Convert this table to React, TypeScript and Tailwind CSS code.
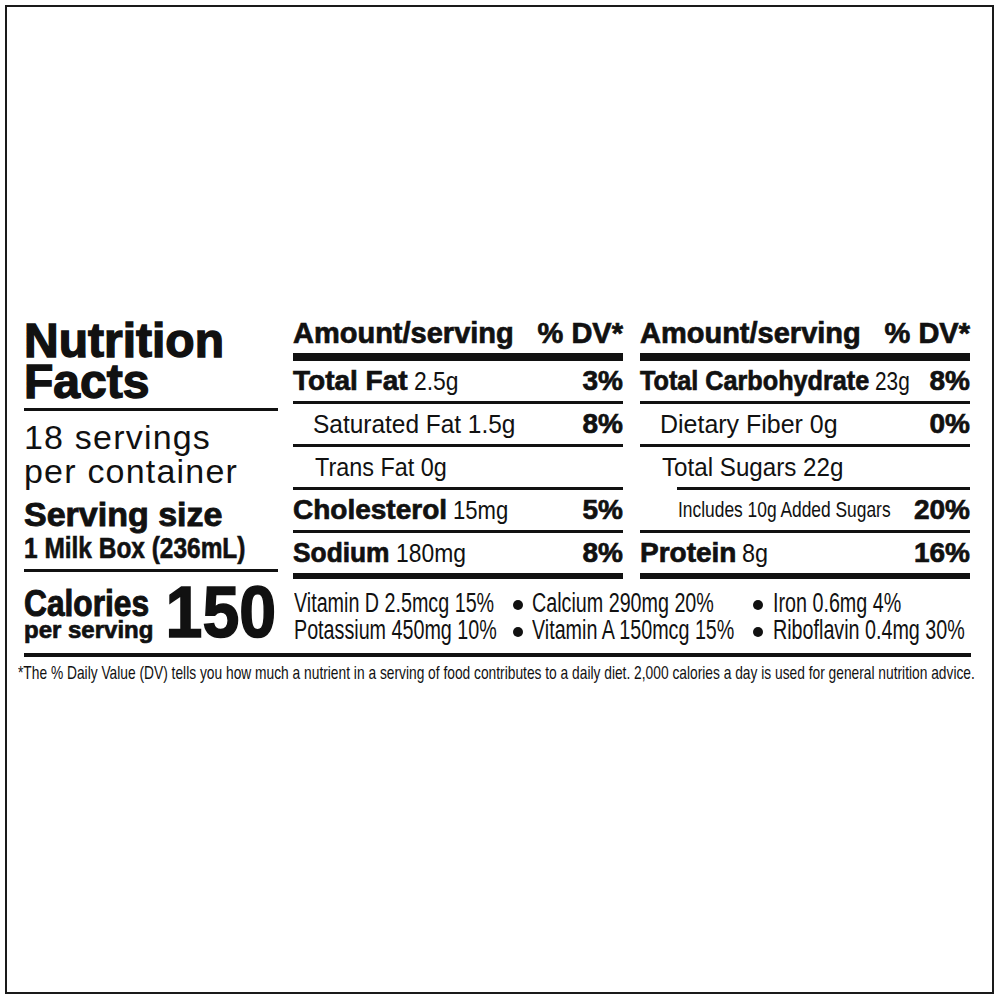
import React from "react";

function Cond({ children, cls }: { children: React.ReactNode; cls: string }) {
  return <span className={`inline-block whitespace-nowrap ${cls}`}>{children}</span>;
}

function Row({
  children,
  pct,
  cls = "",
}: {
  children: React.ReactNode;
  pct?: string;
  cls?: string;
}) {
  return (
    <div className={`h-[40px] flex items-center justify-between ${cls}`}>
      <div className="flex-1 min-w-0 flex items-baseline gap-[6px] whitespace-nowrap">{children}</div>
      {pct ? (
        <span className="shrink-0 text-[28px] font-bold leading-none [-webkit-text-stroke:0.7px_#111]">{pct}</span>
      ) : null}
    </div>
  );
}

function Header() {
  return (
    <>
      <div className="h-[30px] flex items-center justify-between text-[29px] font-bold leading-[30px] [-webkit-text-stroke:0.7px_#111]">
        <span>Amount/serving</span>
        <span>% DV*</span>
      </div>
      <div className="mt-[5px] h-[8px] bg-[#111]" />
    </>
  );
}

function B({ children }: { children: React.ReactNode }) {
  return (
    <span className="text-[28px] font-bold leading-none [-webkit-text-stroke:0.7px_#111]">{children}</span>
  );
}

function V({ children }: { children: React.ReactNode }) {
  return (
    <span className="inline-block whitespace-nowrap origin-left scale-x-[0.73]">{children}</span>
  );
}

function Dot() {
  return (
    <span className="flex justify-center items-center h-[27px] pt-[3px]">
      <span className="w-[10px] h-[10px] rounded-full bg-[#111]" />
    </span>
  );
}

export default function App() {
  return (
    <div className="w-[1000px] h-[1000px] bg-white pt-[5px] pl-[5px] text-[#111] font-['Liberation_Sans',Arial,sans-serif]">
      <div className="w-[989px] h-[989px] border-2 border-[#1a1a1a] overflow-hidden">
        <div className="pt-[311px] pl-[17px]">
          {/* top section */}
          <div className="flex items-start">
            {/* left */}
            <div className="w-[254px] pt-[2px]">
              <div className="text-[48px] font-bold leading-[41px] [-webkit-text-stroke:1.4px_#111]">
                Nutrition
                <br />
                Facts
              </div>
              <div className="mt-[6px] h-[3px] bg-[#111]" />
              <div className="mt-[9px] text-[34px] leading-[34px] tracking-[1.2px]">
                18 servings
                <br />
                per container
              </div>
              <div className="mt-[10px] text-[34px] font-bold leading-[32px] [-webkit-text-stroke:0.9px_#111]">
                Serving size
              </div>
              <div className="mt-[3px] text-[29px] font-bold leading-[30px] [-webkit-text-stroke:0.6px_#111]">
                <Cond cls="origin-left scale-x-[0.843]">1 Milk Box (236mL)</Cond>
              </div>
              <div className="mt-[6px] h-[3px] bg-[#111]" />
            </div>

            {/* middle */}
            <div className="ml-[15px] w-[330px] flex flex-col">
              <Header />
              <Row pct="3%">
                <B>Total Fat</B>
                <Cond cls="text-[26px] leading-none origin-left scale-x-[0.88]">2.5g</Cond>
              </Row>
              <div className="h-[3px] bg-[#111]" />
              <Row pct="8%" cls="pl-[20px]">
                <Cond cls="text-[26px] leading-none origin-left scale-x-[0.94]">Saturated Fat 1.5g</Cond>
              </Row>
              <div className="h-[3px] bg-[#111]" />
              <Row cls="pl-[22px]">
                <Cond cls="text-[26px] leading-none origin-left scale-x-[0.9]">Trans Fat 0g</Cond>
              </Row>
              <div className="h-[3px] bg-[#111]" />
              <Row pct="5%">
                <B>Cholesterol</B>
                <Cond cls="text-[26px] leading-none origin-left scale-x-[0.85]">15mg</Cond>
              </Row>
              <div className="h-[3px] bg-[#111]" />
              <Row pct="8%">
                <span className="inline-block w-[97px] text-[28px] font-bold leading-none origin-left scale-x-[0.94] [-webkit-text-stroke:0.7px_#111]">
                  Sodium
                </span>
                <Cond cls="text-[26px] leading-none origin-left scale-x-[0.88]">180mg</Cond>
              </Row>
              <div className="h-[6px] bg-[#111]" />
            </div>

            {/* right */}
            <div className="ml-[17px] w-[330px] flex flex-col">
              <Header />
              <Row pct="8%">
                <span className="inline-block shrink-0 w-[229px] text-[28px] font-bold leading-none origin-left scale-x-[0.9] [-webkit-text-stroke:0.7px_#111]">
                  Total Carbohydrate
                </span>
                <Cond cls="text-[26px] leading-none origin-left scale-x-[0.8]">23g</Cond>
              </Row>
              <div className="h-[3px] bg-[#111]" />
              <Row pct="0%" cls="pl-[20px]">
                <Cond cls="text-[26px] leading-none origin-left scale-x-[0.96]">Dietary Fiber 0g</Cond>
              </Row>
              <div className="h-[3px] bg-[#111]" />
              <Row cls="pl-[22px]">
                <Cond cls="text-[26px] leading-none origin-left scale-x-[0.93]">Total Sugars 22g</Cond>
              </Row>
              <div className="ml-[37px] h-[3px] bg-[#111]" />
              <Row pct="20%" cls="pl-[38px]">
                <Cond cls="text-[22px] leading-none origin-left scale-x-[0.79]">Includes 10g Added Sugars</Cond>
              </Row>
              <div className="h-[3px] bg-[#111]" />
              <Row pct="16%">
                <B>Protein</B>
                <Cond cls="text-[26px] leading-none origin-left scale-x-[0.9]">8g</Cond>
              </Row>
              <div className="h-[6px] bg-[#111]" />
            </div>
          </div>

          {/* calories + vitamins */}
          <div className="flex h-[74px] items-start">
            <div className="w-[254px] flex justify-between items-start">
              <div className="pt-[9px] w-[132px] shrink-0">
                <div className="text-[36px] font-bold leading-[32px] [-webkit-text-stroke:1px_#111]">
                  <Cond cls="origin-left scale-x-[0.88]">Calories</Cond>
                </div>
                <div className="text-[24px] font-bold leading-[20px] [-webkit-text-stroke:0.7px_#111]">
                  per serving
                </div>
              </div>
              <div className="pt-[3px] shrink-0 text-[72px] font-bold leading-[60px] [-webkit-text-stroke:1.6px_#111]">
                <Cond cls="origin-right scale-x-[0.92]">150</Cond>
              </div>
            </div>
            <div className="ml-[15px] pl-[3px] pt-[11px] grid grid-cols-[209px_29px_211px_30px_minmax(0,1fr)] text-[27px] leading-[27px]">
              <V>Vitamin D 2.5mcg 15%</V>
              <Dot />
              <V>Calcium 290mg 20%</V>
              <Dot />
              <V>Iron 0.6mg 4%</V>
              <V>Potassium 450mg 10%</V>
              <Dot />
              <V>Vitamin A 150mcg 15%</V>
              <Dot />
              <V>Riboflavin 0.4mg 30%</V>
            </div>
          </div>
          <div className="w-[947px] h-[4px] bg-[#111]" />
          <div className="mt-[6px] -ml-[6px] text-[19px] leading-[20px]">
            <span className="inline-block whitespace-nowrap origin-left scale-x-[0.725]">
              *The % Daily Value (DV) tells you how much a nutrient in a serving of food contributes to a daily diet. 2,000 calories a day is used for general nutrition advice.
            </span>
          </div>
        </div>
      </div>
    </div>
  );
}
